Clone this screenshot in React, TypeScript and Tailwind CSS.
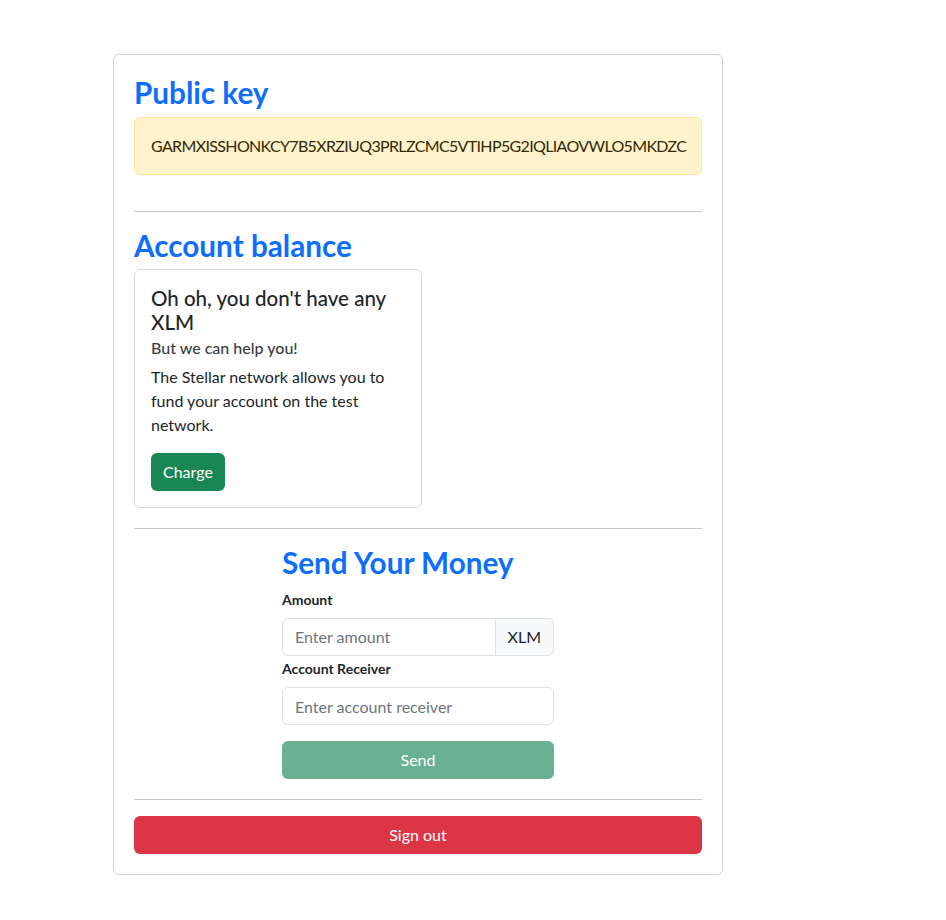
import React from 'react';

const PUBLIC_KEY = 'GARMXISSHONKCY7B5XRZIUQ3PRLZCMC5VTIHP5G2IQLIAOVWLO5MKDZC';

const Heading: React.FC<{ text: string; className?: string }> = ({ text, className = '' }) => {
	return (
		<h2 className={`text-[29.7px] leading-[36px] font-bold text-[#0d6efd] ${className}`}>
			{text}
		</h2>
	);
};

const Divider: React.FC<{ className?: string }> = ({ className = '' }) => {
	return <hr className={`border-0 border-t border-[#c8c8c8] ${className}`} />;
};

const BalanceCard: React.FC = () => {
	return (
		<div className="w-[288px] rounded-[6px] border border-[#d9d9d9] p-4">
			<h5 className="text-[20.5px] leading-[24px] font-medium text-[#212529] mb-2">
				Oh oh, you don't have any XLM
			</h5>
			<h6 className="text-[16px] leading-[19.2px] font-medium text-[#393d42] -mt-1 mb-2">
				But we can help you!
			</h6>
			<p className="text-[16px] leading-[24px] text-[#212529] mb-4">
				The Stellar network allows you to fund your account on the test network.
			</p>
			<button className="h-[38px] px-3 rounded-[6px] bg-[#198754] text-white text-[16px]">
				Charge
			</button>
		</div>
	);
};

const SendForm: React.FC = () => {
	return (
		<div className="w-[272px] mx-auto">
			<Heading text="Send Your Money" className="mb-2" />
			<label className="block text-[14px] leading-[21px] font-bold text-[#212529] mb-2">
				Amount
			</label>
			<div className="flex h-[38px] mb-[2px]">
				<input
					className="flex-1 min-w-0 border border-[#dee2e6] rounded-l-[6px] px-3 text-[16px] text-[#212529] placeholder:text-[#6c757d] outline-none"
					placeholder="Enter amount"
				/>
				<span className="flex items-center px-3 -ml-px border border-[#dee2e6] rounded-r-[6px] bg-[#f8f9fa] text-[16px] text-[#212529]">
					XLM
				</span>
			</div>
			<label className="block text-[14px] leading-[21px] font-bold text-[#212529] mb-2">
				Account Receiver
			</label>
			<input
				className="block w-full h-[38px] border border-[#dee2e6] rounded-[6px] px-3 text-[16px] text-[#212529] placeholder:text-[#6c757d] outline-none"
				placeholder="Enter account receiver"
			/>
			<button
				disabled
				className="mt-4 w-full h-[38px] rounded-[6px] bg-[#6ab092] text-white text-[16px]"
			>
				Send
			</button>
		</div>
	);
};

export default function App() {
	return (
		<div className="min-h-screen bg-white font-['Lato',sans-serif] text-[#212529] pt-[54px] pl-[113px]">
			<div className="w-[610px] rounded-[6px] border border-[#d0d0d0] px-5 pt-5 pb-5">
				<Heading text="Public key" className="mb-[6px]" />
				<div className="h-[58px] flex items-center px-4 rounded-[6px] border border-[#ffe69c] bg-[#fff3cd] text-[16px] text-[#332701] whitespace-nowrap">
					<span className="tracking-[-0.65px]">{PUBLIC_KEY}</span>
				</div>
				<Divider className="mt-9 mb-4" />
				<Heading text="Account balance" className="mb-[5px]" />
				<BalanceCard />
				<Divider className="mt-5 mb-4" />
				<SendForm />
				<Divider className="mt-5 mb-4" />
				<button className="w-full h-[38px] rounded-[6px] bg-[#dc3545] text-white text-[16px]">
					Sign out
				</button>
			</div>
		</div>
	);
}
